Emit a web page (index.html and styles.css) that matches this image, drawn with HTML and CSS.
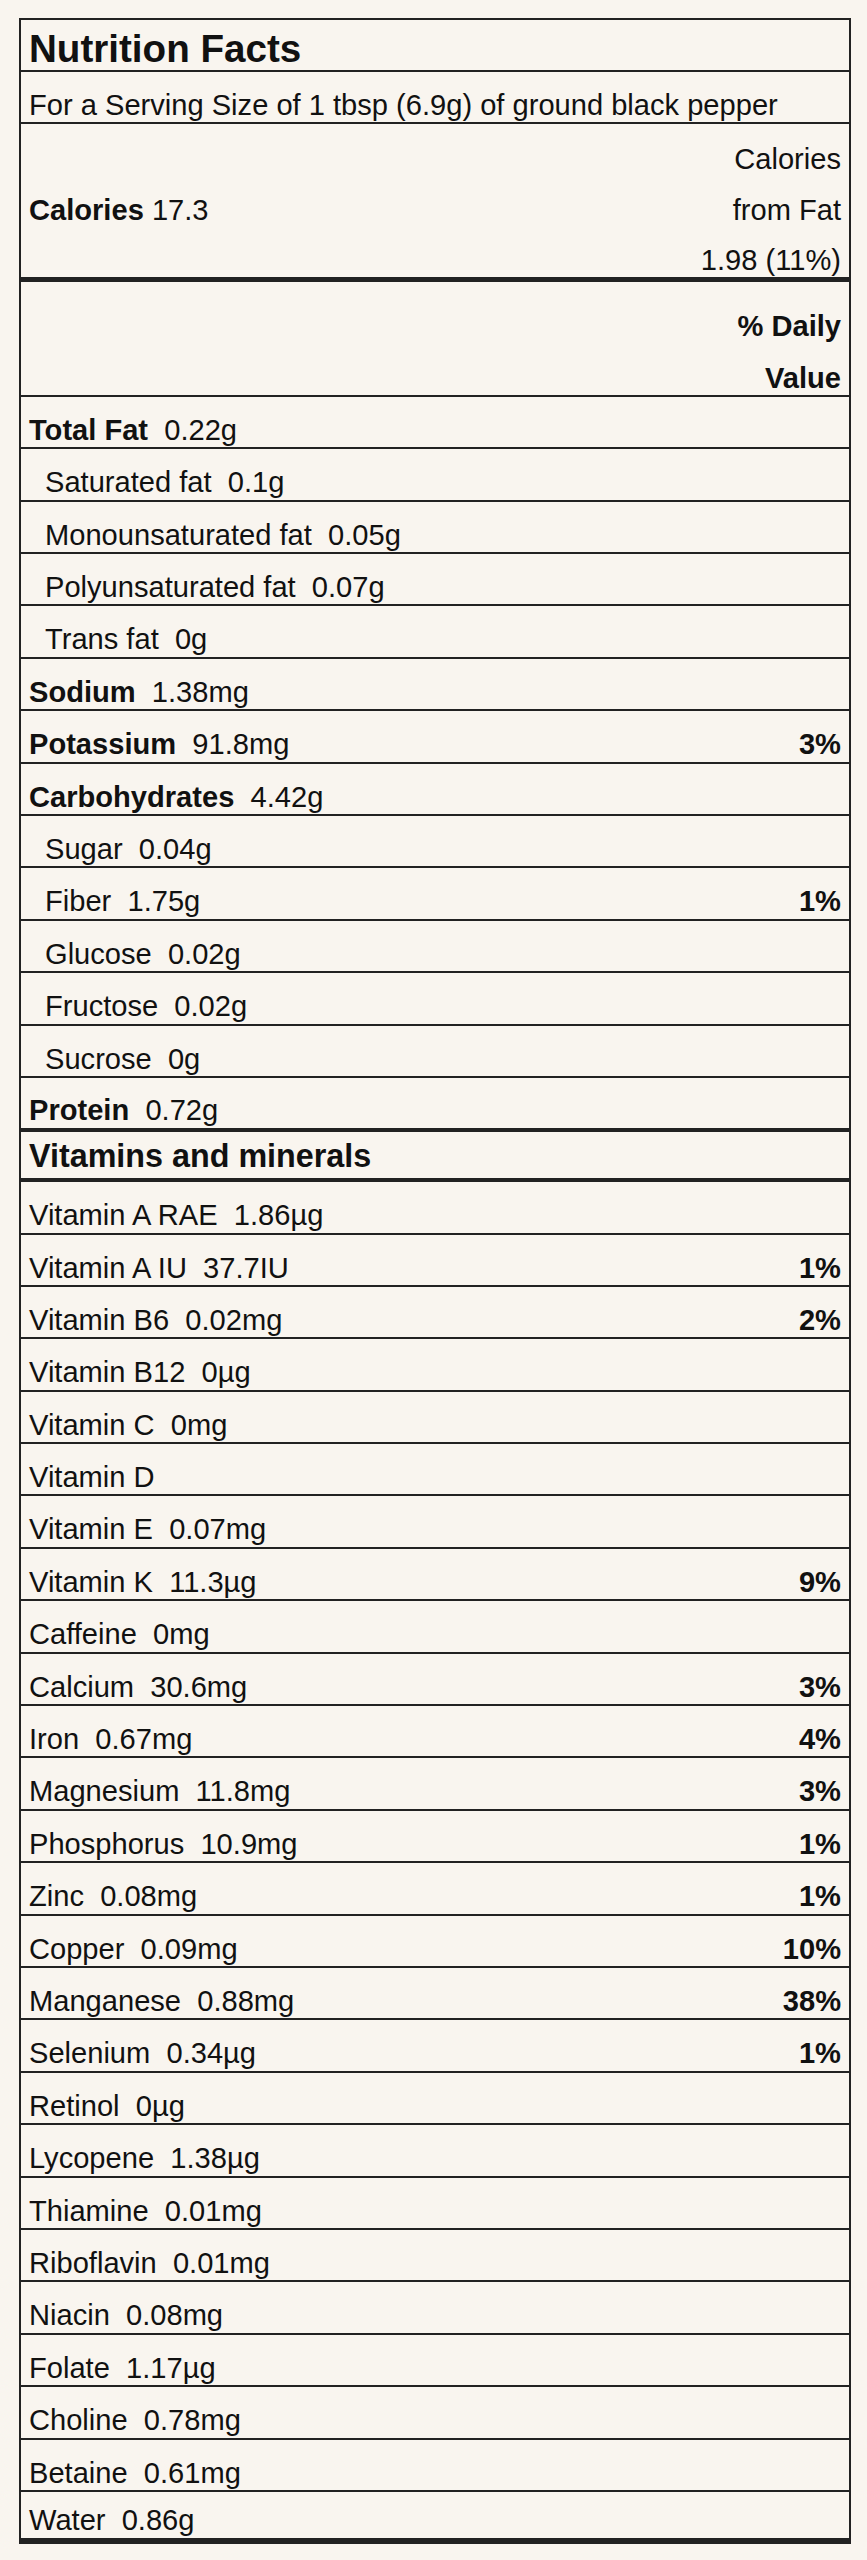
FILE: index.html
```html
<!DOCTYPE html>
<html lang="en">
<head>
<meta charset="utf-8">
<title>Nutrition Facts</title>
<link rel="stylesheet" href="styles.css">
</head>
<body>
<div class="label">
  <div class="title">Nutrition Facts</div>
  <div class="row">For a Serving Size of 1 tbsp (6.9g) of ground black pepper</div>
  <div class="cal">
    <div class="cal-left"><b>Calories</b> 17.3</div>
    <div class="cal-right">Calories<br>from Fat<br>1.98 (11%)</div>
  </div>
  <div class="dv"><b>% Daily<br>Value</b></div>

  <div class="row"><span><b>Total Fat</b>&nbsp; 0.22g</span></div>
  <div class="row sub"><span>Saturated fat&nbsp; 0.1g</span></div>
  <div class="row sub"><span>Monounsaturated fat&nbsp; 0.05g</span></div>
  <div class="row sub"><span>Polyunsaturated fat&nbsp; 0.07g</span></div>
  <div class="row sub"><span>Trans fat&nbsp; 0g</span></div>
  <div class="row"><span><b>Sodium</b>&nbsp; 1.38mg</span></div>
  <div class="row"><span><b>Potassium</b>&nbsp; 91.8mg</span><b>3%</b></div>
  <div class="row"><span><b>Carbohydrates</b>&nbsp; 4.42g</span></div>
  <div class="row sub"><span>Sugar&nbsp; 0.04g</span></div>
  <div class="row sub"><span>Fiber&nbsp; 1.75g</span><b>1%</b></div>
  <div class="row sub"><span>Glucose&nbsp; 0.02g</span></div>
  <div class="row sub"><span>Fructose&nbsp; 0.02g</span></div>
  <div class="row sub"><span>Sucrose&nbsp; 0g</span></div>
  <div class="row protein"><span><b>Protein</b>&nbsp; 0.72g</span></div>

  <div class="vm">Vitamins and minerals</div>

  <div class="row"><span>Vitamin A RAE&nbsp; 1.86µg</span></div>
  <div class="row"><span>Vitamin A IU&nbsp; 37.7IU</span><b>1%</b></div>
  <div class="row"><span>Vitamin B6&nbsp; 0.02mg</span><b>2%</b></div>
  <div class="row"><span>Vitamin B12&nbsp; 0µg</span></div>
  <div class="row"><span>Vitamin C&nbsp; 0mg</span></div>
  <div class="row"><span>Vitamin D</span></div>
  <div class="row"><span>Vitamin E&nbsp; 0.07mg</span></div>
  <div class="row"><span>Vitamin K&nbsp; 11.3µg</span><b>9%</b></div>
  <div class="row"><span>Caffeine&nbsp; 0mg</span></div>
  <div class="row"><span>Calcium&nbsp; 30.6mg</span><b>3%</b></div>
  <div class="row"><span>Iron&nbsp; 0.67mg</span><b>4%</b></div>
  <div class="row"><span>Magnesium&nbsp; 11.8mg</span><b>3%</b></div>
  <div class="row"><span>Phosphorus&nbsp; 10.9mg</span><b>1%</b></div>
  <div class="row"><span>Zinc&nbsp; 0.08mg</span><b>1%</b></div>
  <div class="row"><span>Copper&nbsp; 0.09mg</span><b>10%</b></div>
  <div class="row"><span>Manganese&nbsp; 0.88mg</span><b>38%</b></div>
  <div class="row"><span>Selenium&nbsp; 0.34µg</span><b>1%</b></div>
  <div class="row"><span>Retinol&nbsp; 0µg</span></div>
  <div class="row"><span>Lycopene&nbsp; 1.38µg</span></div>
  <div class="row"><span>Thiamine&nbsp; 0.01mg</span></div>
  <div class="row"><span>Riboflavin&nbsp; 0.01mg</span></div>
  <div class="row"><span>Niacin&nbsp; 0.08mg</span></div>
  <div class="row"><span>Folate&nbsp; 1.17µg</span></div>
  <div class="row"><span>Choline&nbsp; 0.78mg</span></div>
  <div class="row"><span>Betaine&nbsp; 0.61mg</span></div>
  <div class="row last"><span>Water&nbsp; 0.86g</span></div>
</div>
</body>
</html>
```

FILE: styles.css
```css
html, body {
  margin: 0;
  padding: 0;
  background: #f9f5ef;
}

body {
  font-family: "Liberation Sans", Arial, sans-serif;
  color: #111;
}

.label {
  width: 832px;
  margin: 18px 0 0 19px;
  border: 2px solid #222;
  border-bottom: none;
  box-sizing: border-box;
}

.title {
  box-sizing: border-box;
  height: 52px;
  padding: 7px 8px 0;
  font-size: 38.6px;
  line-height: 43px;
  font-weight: bold;
  border-bottom: 2px solid #222;
}

.row {
  box-sizing: border-box;
  display: flex;
  justify-content: space-between;
  height: 52.4px;
  padding: 17px 8px 0;
  font-size: 29.1px;
  line-height: 33.4px;
  white-space: nowrap;
  border-bottom: 2px solid #222;
}

.row.sub {
  padding-left: 24px;
}

.row.protein {
  height: 53.7px;
  padding-top: 15.6px;
  border-bottom-width: 4px;
}

.row.last {
  height: 52px;
  padding-top: 12.3px;
  border-bottom-width: 6px;
}

.cal {
  box-sizing: border-box;
  display: flex;
  justify-content: space-between;
  height: 157.7px;
  padding: 9.7px 8px 0;
  font-size: 29.1px;
  line-height: 50.7px;
  border-bottom: 5px solid #222;
}

.cal-left {
  padding-top: 50.7px;
}

.cal-right {
  text-align: right;
}

.dv {
  box-sizing: border-box;
  height: 114.8px;
  padding: 18.9px 8px 0;
  font-size: 29.1px;
  line-height: 51.7px;
  text-align: right;
  border-bottom: 2px solid #222;
}

.vm {
  box-sizing: border-box;
  height: 50.5px;
  padding: 6.3px 8px 0;
  font-size: 32.3px;
  line-height: 36.8px;
  font-weight: bold;
  border-bottom: 4px solid #222;
}
```
